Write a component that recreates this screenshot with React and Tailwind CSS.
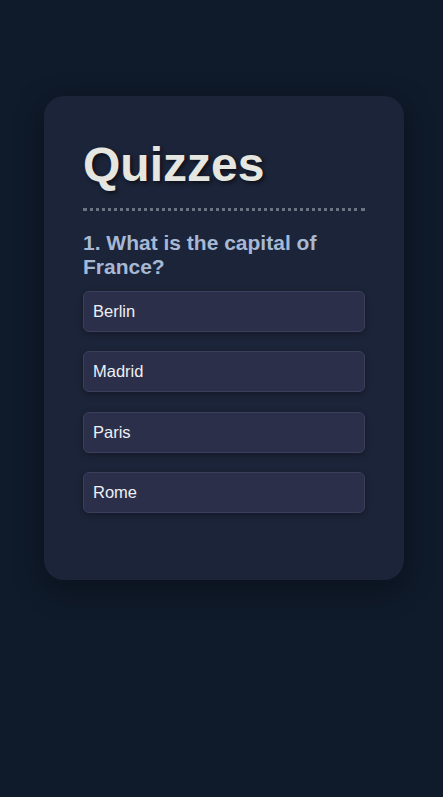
import React from 'react'

const options = ['Berlin', 'Madrid', 'Paris', 'Rome']

const App = () => {
  return (
    <div
      className="min-h-[797px] bg-[#0f1a2a] pt-[96px]"
      style={{ fontFamily: '"Liberation Sans", Arial, sans-serif' }}
    >
      <div className="ml-[44px] w-[360px] h-[484px] rounded-[20px] bg-[#1c2439] px-[39px] pt-[40px] shadow-[0_8px_30px_rgba(0,0,0,0.35)]">
        {/* header */}
        <h1 className="text-[48px] leading-[1.2] font-bold text-[#e6e6e1] pb-[14px] border-b-[3px] border-dotted border-[#6b7280] [text-shadow:2px_2px_4px_rgba(0,0,0,0.6)]">
          Quizzes
        </h1>

        <h2 className="mt-[20px] text-[21px] leading-[24px] font-bold text-[#a6b8d4]">
          1. What is the capital of France?
        </h2>

        <div className="mt-[12px] flex flex-col gap-[19.5px]">
          {options.map((opt) => (
            <button
              key={opt}
              className="h-[41px] flex items-center pl-[9px] text-left text-[16.5px] text-[#eef0f5] bg-[#2b2f4a] border border-[#3b3f5c] rounded-[6px] shadow-[0_2px_6px_rgba(0,0,0,0.3)]"
            >
              {opt}
            </button>
          ))}
        </div>
      </div>
    </div>
  )
}

export default App
